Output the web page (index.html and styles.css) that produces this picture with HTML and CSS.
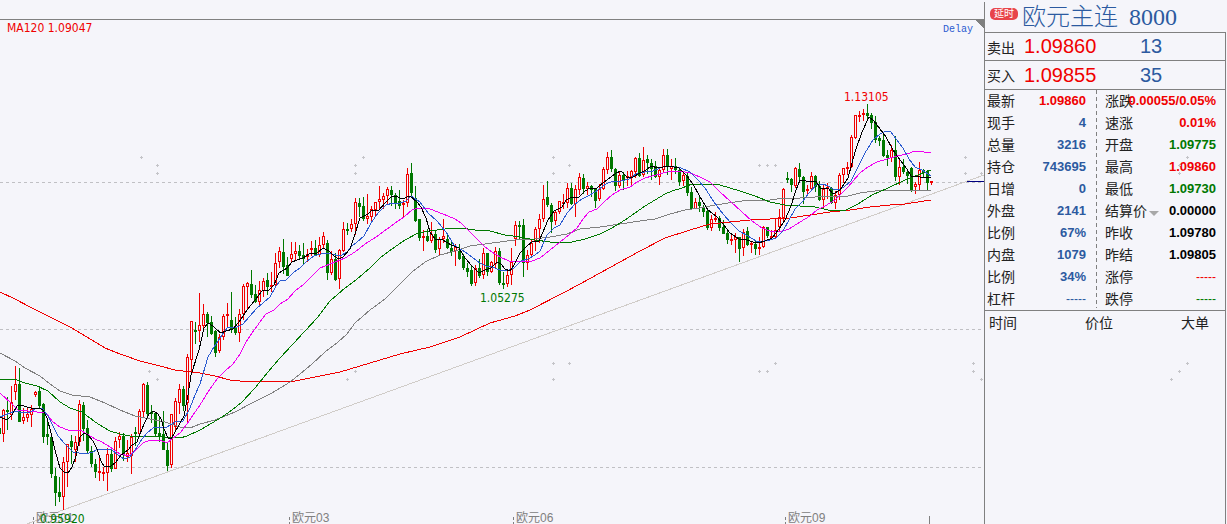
FILE: index.html
```html
<!DOCTYPE html>
<html lang="zh-CN">
<head>
    <meta charset="utf-8">
    <title>欧元主连 8000</title>
    <link rel="stylesheet" href="styles.css">
</head>
<body>
    <div class="terminal">
        <main class="chart">
            <svg id="kline" viewBox="0 0 984 524">
                <g class="grid">
                    <path d="M0 182.5H984M0 329.5H984M0 467.5H984"/>
                </g>
                <path class="frame" d="M0 19.5H984"/>
                <path class="corner" d="M974 19H984V29Z"/>
                <g id="dots" class="dots"></g>
                <path class="trend" d="M27 524L63 510L984 175"/>
                <g id="candles"></g>
                <g id="averages"></g>
                <path class="last-price" d="M967 181.5H984"/>
                <path class="tick dotted" d="M33.5 517V524M289.5 517V524M513.5 517V524M785.5 517V524"/>
                <path class="tick" d="M929.5 516V524"/>
                <text class="axis" x="36" y="522">欧元01</text>
                <text class="axis" x="292" y="522">欧元03</text>
                <text class="axis" x="516" y="522">欧元06</text>
                <text class="axis" x="788" y="522">欧元09</text>
                <text class="label up" x="7" y="32">MA120 1.09047</text>
                <text class="label up" x="844" y="101">1.13105</text>
                <text class="label down" x="480" y="302">1.05275</text>
                <text class="label down" x="40" y="523">0.95920</text>
                <text class="delay" x="943" y="32">Delay</text>
            </svg>
        </main>

        <aside class="panel">
            <svg class="panel-dots" viewBox="0 0 243 524"><g id="panel-dots" class="dots"></g></svg>
            <header class="title">
                <span class="badge">延时</span>
                <h1>欧元主连 <span class="code">8000</span></h1>
            </header>
            <div class="box">
                <div class="order">
                    <span class="name">卖出</span>
                    <span class="price">1.09860</span>
                    <span class="volume">13</span>
                </div>
                <div class="order">
                    <span class="name">买入</span>
                    <span class="price">1.09855</span>
                    <span class="volume">35</span>
                </div>
                <div class="quotes">
                    <table class="left">
                        <tr><th>最新</th><td class="up">1.09860</td></tr>
                        <tr><th>现手</th><td>4</td></tr>
                        <tr><th>总量</th><td>3216</td></tr>
                        <tr><th>持仓</th><td>743695</td></tr>
                        <tr><th>日增</th><td>0</td></tr>
                        <tr><th>外盘</th><td>2141</td></tr>
                        <tr><th>比例</th><td>67%</td></tr>
                        <tr><th>内盘</th><td>1079</td></tr>
                        <tr><th>比例</th><td>34%</td></tr>
                        <tr><th>杠杆</th><td class="none">-----</td></tr>
                    </table>
                    <table class="right">
                        <tr><th>涨跌</th><td class="up">0.00055/0.05%</td></tr>
                        <tr><th>速涨</th><td class="up">0.01%</td></tr>
                        <tr><th>开盘</th><td class="down">1.09775</td></tr>
                        <tr><th>最高</th><td class="up">1.09860</td></tr>
                        <tr><th>最低</th><td class="down">1.09730</td></tr>
                        <tr><th><button class="settle">结算价</button></th><td class="flat">0.00000</td></tr>
                        <tr><th>昨收</th><td class="flat">1.09780</td></tr>
                        <tr><th>昨结</th><td class="flat">1.09805</td></tr>
                        <tr><th>涨停</th><td class="up none">-----</td></tr>
                        <tr><th>跌停</th><td class="down none">-----</td></tr>
                    </table>
                </div>
                <div class="trades">
                    <span>时间</span>
                    <span>价位</span>
                    <span>大单</span>
                </div>
            </div>
        </aside>
    </div>
    <script src="chart.js"></script>
</body>
</html>
```
FILE: styles.css
```css
* {
    box-sizing: border-box;
}

body {
    margin: 0;
    background-color: #f5f5fa;
    font-family: "Liberation Sans", "Noto Sans CJK SC", sans-serif;
    font-size: 14px;
    color: #222;
    overflow: hidden;
}

.terminal {
    display: flex;
    min-height: 100vh;
}

.chart {
    flex: 1;
    min-width: 0;
}

#kline {
    display: block;
    width: 100%;
    shape-rendering: crispEdges;
}

#kline path, #kline polyline {
    fill: none;
    stroke-width: 1;
}

#kline .grid path {
    stroke: #c0c0c4;
    stroke-dasharray: 3 3;
}

#kline .frame, #kline .tick {
    stroke: #808080;
}

#kline .dotted {
    stroke-dasharray: 3 2;
}

#kline .corner {
    fill: #808080;
}

#kline .trend {
    stroke: #d0ccc8;
}

#kline .last-price {
    stroke: #000080;
}

.dots path {
    fill: none;
    stroke: #c4c4c8;
    shape-rendering: crispEdges;
}

#kline .rise {
    stroke: #f00000;
}

#kline .fall {
    stroke: #007800;
    fill: #007800;
}

.label {
    font-family: "DejaVu Sans Condensed", "DejaVu Sans", sans-serif;
    font-size: 12px;
}

.label.up {
    fill: #f00000;
}

.label.down {
    fill: #007800;
}

.axis {
    font-size: 12px;
    font-family: "Liberation Sans", "Noto Sans CJK SC", sans-serif;
    fill: #808080;
}

.delay {
    font-family: "Liberation Mono", monospace;
    font-size: 10px;
    fill: #2b5bd0;
}

.panel {
    position: relative;
    width: 243px;
    flex: none;
    display: flex;
    flex-direction: column;
    border-left: 1px solid #808080;
    margin-top: 2px;
}

.panel-dots {
    position: absolute;
    top: -2px;
    left: -1px;
    width: 243px;
}

.title {
    display: flex;
    align-items: center;
    height: 30px;
    padding-left: 5px;
    gap: 4px;
}

.title h1 {
    margin: 0;
    font-size: 24px;
    line-height: 30px;
    font-weight: 300;
    color: #2c5aa0;
    font-family: "Liberation Serif", "Noto Sans CJK SC", serif;
    white-space: nowrap;
}

.code {
    margin-left: 5px;
}

.badge {
    width: 28px;
    height: 12px;
    margin-bottom: 7px;
    border-radius: 5px;
    background-color: #e8444a;
    color: #fff;
    font-size: 10px;
    line-height: 12px;
    text-align: center;
}

.box {
    flex: 1;
    margin-right: 1px;
    border-top: 1px solid #808080;
    border-right: 1px solid #808080;
}

.order {
    display: flex;
    align-items: center;
    height: 28px;
    padding-left: 2px;
    border-bottom: 1px solid #808080;
}

.order + .order {
    height: 29px;
}

.order .name {
    width: 37px;
}

.order .price {
    width: 86px;
    font-size: 20px;
    color: #f00000;
}

.order .volume {
    width: 82px;
    text-align: center;
    font-size: 20px;
    color: #2c5aa0;
}

.quotes {
    display: flex;
    border-bottom: 1px solid #808080;
}

.quotes table {
    border-collapse: collapse;
    table-layout: fixed;
}

.quotes .left {
    flex: none;
    width: 112px;
    background: repeating-linear-gradient(to bottom, #808080 0, #808080 4px, transparent 4px, transparent 7px) right top / 1px 218px no-repeat;
}

.quotes .right {
    flex: none;
    width: 128px;
}

.quotes th, .quotes td {
    height: 22px;
    padding: 0;
    line-height: 22px;
    white-space: nowrap;
}

.quotes th {
    width: 30px;
    padding-left: 2px;
    font-weight: normal;
    text-align: left;
}

.quotes td {
    padding-right: 11px;
    text-align: right;
    font-size: 13px;
    font-weight: bold;
    color: #2c5aa0;
}

.quotes .right th {
    padding-left: 8px;
}

.quotes .right td {
    padding-right: 9px;
}

.quotes .up {
    color: #f00000;
}

.quotes .down {
    color: #007800;
}

.quotes .flat {
    color: #000;
}

.quotes .none {
    font-weight: normal;
    font-size: 12px;
}

.settle {
    display: flex;
    align-items: center;
    gap: 2px;
    height: 22px;
    padding: 0;
    border: none;
    background: none;
    color: inherit;
    font: inherit;
}

.settle::after {
    content: "";
    margin-top: 5px;
    border: 5px solid transparent;
    border-top-color: #a8a8a8;
    border-bottom: none;
}

.trades {
    display: flex;
    justify-content: space-between;
    padding: 0 16px 0 4px;
    line-height: 24px;
}
```
FILE: chart.js
```javascript
const NS = 'http://www.w3.org/2000/svg';
const STEP = 4;

// one bar per entry: colour, high, body top, body bottom, low
const bars = `
d 428 428 434 434|u 409 410 434 442|d 397 410 412 430|u 386 402 415 420|u 366 384 392 400|d 368 384 422 422
u 408 417 421 424|u 408 414 418 422|u 405 409 415 427|u 391 392 395 397|d 386 391 406 408|d 403 404 437 443
d 418 434 437 445|d 435 437 474 478|d 468 476 493 506|d 477 492 497 502|u 457 462 497 510|u 444 444 462 487
d 435 441 447 464|u 436 442 450 462|u 400 404 442 446|d 402 405 429 441|d 420 428 451 453|d 446 451 464 467
d 459 464 472 478|u 456 471 473 481|u 467 472 474 481|u 448 454 473 491|d 447 454 469 472|u 437 441 469 469
u 432 436 440 448|d 433 436 455 461|u 440 453 457 462|u 434 437 456 474|d 427 432 434 446|u 409 411 434 437
u 383 384 412 417|d 382 385 414 417|d 405 412 414 423|d 413 413 434 437|d 417 433 436 442|d 411 434 450 450
d 442 450 466 471|u 414 414 465 468|u 398 401 427 431|u 384 389 403 414|d 386 389 406 411|u 354 357 403 423
u 321 321 360 372|d 322 330 332 344|u 293 325 331 342|u 304 314 326 329|d 312 314 323 337|d 316 322 334 335
d 330 331 353 357|u 334 337 351 353|u 314 316 337 340|u 303 314 316 327|d 292 320 330 333|d 317 328 333 335
u 309 314 333 342|u 284 286 314 320|u 282 283 287 310|d 270 284 295 298|d 285 294 302 303|u 281 290 302 306
u 278 281 291 297|d 273 280 287 295|u 272 285 287 292|u 253 263 285 287|u 247 251 262 268|d 239 252 267 274
d 257 265 276 276|u 242 254 259 262|u 242 251 254 261|d 245 251 256 260|d 243 255 259 264|u 249 254 257 262
u 241 248 250 256|d 240 248 256 256|u 237 245 255 257|u 232 236 245 249|d 240 243 273 280|u 251 259 273 275
d 253 259 280 281|u 249 250 279 289|u 222 229 251 252|d 223 229 231 235|u 219 224 229 232|u 198 202 224 235
d 198 203 207 217|d 197 206 219 221|u 194 216 219 224|u 206 209 217 221|u 202 202 210 216|u 186 199 202 210
u 193 196 200 209|u 187 189 196 204|d 186 190 195 206|d 193 195 203 209|d 190 201 206 209|u 200 203 205 218
u 168 174 203 207|d 163 173 193 198|d 186 198 221 222|d 219 219 238 241|u 230 236 238 251|d 229 236 241 242
u 222 234 241 243|d 231 234 250 253|u 237 239 249 255|u 219 236 239 243|d 233 239 248 249|d 240 248 252 256
u 244 247 251 266|d 244 251 259 260|d 254 256 268 270|d 263 268 272 277|d 265 270 284 286|u 265 268 283 286
d 259 268 276 278|u 248 253 275 279|d 253 253 272 276|u 261 262 272 273|u 247 251 264 268|d 248 251 283 285
d 272 283 285 289|u 270 275 284 287|u 248 262 275 285|u 221 225 239 246|d 221 225 227 240|d 219 225 263 277
u 250 255 263 270|u 239 243 255 257|u 227 229 241 251|u 214 219 229 243|u 185 199 219 222|d 181 197 205 207
d 203 205 222 233|u 210 212 221 225|u 201 201 212 214|u 194 202 204 209|u 183 188 203 208|d 183 188 204 205
u 185 189 204 217|u 173 177 190 195|d 174 178 189 194|u 182 186 189 195|d 185 186 190 197|d 188 189 201 208
u 184 189 199 201|u 167 169 189 190|u 152 157 170 174|d 150 157 169 172|d 168 169 186 191|u 171 175 186 188
d 172 175 181 190|u 171 176 178 186|u 170 171 177 185|u 157 158 172 178|d 153 158 176 177|u 147 160 175 177
d 155 159 163 174|d 159 163 169 180|d 161 166 177 178|u 168 170 177 185|u 149 155 170 172|d 149 155 166 175
u 159 166 169 180|d 158 166 170 174|d 167 170 182 186|u 173 175 181 186|d 173 176 193 196|d 187 192 209 209
u 198 202 209 209|d 195 202 206 212|d 205 208 212 217|d 209 211 228 230|u 215 219 228 231|u 212 218 219 222
d 216 218 228 231|d 220 227 234 234|d 231 233 240 244|u 235 239 241 245|u 233 237 240 253|d 237 237 249 262
u 229 232 248 256|d 227 231 245 246|u 241 243 245 253|d 240 244 249 255|u 237 247 249 255|u 226 227 247 248
d 227 227 236 238|u 230 236 238 240|u 218 230 237 238|u 209 217 227 231|u 188 189 218 223|d 172 178 180 183
d 178 179 185 192|u 167 168 186 188|d 163 169 177 180|d 176 177 192 204|u 185 189 191 194|u 172 176 189 191
d 175 176 187 192|d 181 186 200 201|u 185 189 200 208|u 183 187 189 199|d 187 188 203 204|u 191 195 203 209
u 173 175 195 200|u 168 168 175 183|u 162 167 169 175|u 135 137 167 168|u 115 115 138 139|u 111 115 117 122
u 109 113 115 121|d 104 113 116 121|d 113 115 123 129|d 116 122 140 143|d 136 138 141 146|d 135 140 156 157
d 150 155 158 166|u 145 150 158 162|d 136 150 177 181|u 160 167 177 185|d 159 167 172 174|d 170 172 176 184
d 167 168 191 192|u 182 184 187 194|u 162 170 185 190|d 169 170 173 178|d 170 171 183 191|u 181 181 183 185
`.trim().split(/[|\n]/);

const averages = [
    { color: '#f00000', points: '0,292 15,299 30,307 50,317 70,327 92,340 105,348 120,354 140,361 160,366 175,370 200,373 215,376 230,380 240,381 295,381 315,377 340,372 360,366 400,354 430,347 460,337 490,323 515,316 530,310 563,293 580,284 600,273 620,262 640,251 665,238 690,230 710,224 730,222 750,220 770,219 790,218 810,215 830,212 850,210 870,207 890,205 905,204 931,200' },
    { color: '#808080', points: '0,353 15,361 25,368 40,376 50,384 60,391 72,395 90,397 105,403 120,410 135,416 150,419 165,422 180,427 190,428 200,424 215,420 235,412 252,403 272,393 290,382 300,374 312,364 325,352 337,343 347,334 355,323 370,310 385,299 398,286 412,272 425,262 440,255 455,251 470,246 485,244 500,242 515,240 535,239 550,237 567,234 580,229 600,227 620,224 640,221 655,219 670,214 685,210 700,208 715,205 735,202 750,200 770,200 785,198 800,198 815,197 848,196 860,193 875,191 890,190 931,190' },
    { color: '#007800', points: '0,379 14,379 25,383 37,386 48,391 60,402 70,408 82,412 90,418 98,424 110,431 120,434 130,436 150,436 165,437 180,438 187,436 200,430 212,423 222,417 232,410 242,402 255,388 268,372 280,358 293,344 305,331 318,317 330,301 337,295 345,288 356,280 370,268 380,258 392,249 405,240 418,233 430,231 445,229 460,228 475,230 490,231 505,235 520,237 535,240 550,242 572,242 585,239 600,234 612,228 625,220 635,213 645,206 655,200 665,194 672,191 682,188 692,184 705,184 720,185 730,188 740,191 755,196 770,202 785,205 800,206 815,207 828,210 846,210 858,204 872,195 888,188 905,180 918,175 931,170' },
    { color: '#f000f0', points: '0,393 12,404 18,410 28,411 37,412 46,413 53,422 60,427 68,430 80,430 87,434 95,439 102,442 110,447 120,454 129,456 136,450 143,443 150,440 160,440 167,443 173,438 180,433 187,424 193,415 200,405 208,392 217,379 225,371 233,364 240,354 246,342 252,333 260,322 266,314 274,310 280,304 288,299 295,291 304,284 312,276 320,268 330,264 345,258 355,252 365,244 376,237 387,229 398,221 404,217 412,210 418,208 428,208 435,211 443,214 455,219 461,223 468,230 476,238 485,247 492,252 500,257 509,261 532,261 540,258 550,250 560,242 570,234 577,228 583,219 589,212 597,209 604,202 612,195 620,190 630,187 637,182 645,178 652,176 660,174 670,171 680,171 690,173 700,177 710,182 719,191 730,201 741,211 752,221 762,228 770,231 779,232 789,229 800,222 810,216 817,210 825,206 835,200 842,193 848,187 853,181 860,173 868,167 877,162 887,159 897,156 907,154 915,151 924,152 931,153' },
    { color: '#2b5bd0', points: '0,417 10,413 15,411 23,413 30,412 37,408 42,408 48,416 52,424 58,436 65,444 73,452 79,453 85,454 93,452 98,449 105,449 112,450 118,455 124,459 130,457 137,447 142,439 147,433 153,428 160,427 167,427 175,422 183,421 190,408 195,395 200,384 208,357 214,347 222,335 228,327 235,328 243,324 250,316 257,308 263,303 270,297 276,286 280,281 286,280 294,272 300,268 307,261 314,256 324,253 332,254 340,256 347,252 352,246 356,243 364,236 371,223 378,213 386,205 393,203 400,203 406,201 411,196 420,202 428,213 437,221 446,232 454,245 465,252 472,257 480,263 486,266 492,267 500,270 506,271 514,268 521,261 528,259 535,255 540,251 547,235 554,228 560,225 567,213 575,204 582,199 590,195 598,190 606,184 613,181 621,181 629,179 636,174 645,172 653,171 660,168 666,166 675,167 681,168 690,172 698,180 705,188 714,202 723,214 731,223 739,231 748,236 756,241 764,241 770,240 776,238 783,231 789,220 795,209 802,202 809,193 817,184 823,184 828,186 833,189 838,190 844,187 851,181 857,169 865,153 873,140 880,134 886,131 891,132 896,139 903,148 909,159 915,167 922,170 931,176' },
    { color: '#000000', points: '0,417 7,420 12,415 17,406 21,405 27,407 35,409 39,408 43,410 47,418 51,433 55,450 60,468 64,472 68,473 72,467 76,456 80,437 84,433 88,435 93,441 97,449 101,461 104,466 111,466 116,462 121,455 128,450 132,445 137,442 140,434 144,424 149,414 154,411 158,414 161,419 164,429 168,438 171,439 174,434 179,425 184,416 188,395 191,375 199,350 204,328 208,323 213,326 217,330 221,333 226,331 233,329 239,322 247,310 255,300 262,291 269,290 274,285 279,273 287,268 292,262 297,260 303,258 309,254 317,253 323,248 329,251 334,256 339,259 343,257 350,249 355,234 360,218 368,214 372,210 379,210 386,202 391,197 396,196 402,199 410,196 417,202 421,207 426,218 430,232 435,239 443,240 451,245 459,248 465,258 472,266 479,273 485,270 491,268 497,262 501,264 505,269 510,271 514,265 520,253 527,246 533,241 539,241 543,232 548,220 554,211 562,207 566,200 572,197 579,197 585,191 590,188 597,188 604,182 611,177 616,173 621,171 627,177 633,177 640,173 646,170 651,166 658,168 669,166 679,168 686,175 693,184 700,197 708,210 716,216 723,224 730,233 739,239 747,240 753,242 758,243 765,241 772,238 779,229 785,220 791,206 796,190 800,180 806,181 811,182 816,181 820,188 828,188 833,194 840,190 848,178 855,152 862,132 869,117 874,121 886,137 893,150 900,160 907,169 911,176 920,177 931,178' }
];

const chartDots = [
    [141, 157], [157, 165], [157, 173], [363, 157], [355, 165], [355, 173], [553, 157], [569, 165], [553, 173],
    [759, 165], [767, 165], [775, 165], [965, 157], [965, 173], [981, 173],
    [149, 371], [157, 379], [355, 371], [347, 379], [553, 363], [569, 363], [553, 379],
    [775, 363], [759, 371], [767, 371], [973, 363], [973, 371], [981, 379]
];
const panelDots = [[203, 157], [195, 165], [195, 173], [203, 363], [195, 371], [187, 379]];

function add(parent, tag, attrs) {
    const el = document.createElementNS(NS, tag);
    for (const key in attrs) {
        el.setAttribute(key, attrs[key]);
    }
    document.getElementById(parent).appendChild(el);
}

function drawDots(parent, dots) {
    const d = dots.map(([x, y]) => `M${x - 1} ${y + 0.5}h3M${x + 0.5} ${y - 1}v3`).join('');
    add(parent, 'path', { d });
}

bars.forEach((bar, i) => {
    const [dir, ...values] = bar.split(' ');
    const [high, top, bottom, low] = values.map(Number);
    const x = i * STEP - 0.5;
    const h = Math.max(bottom - top - 1, 1);
    // wick stops at the body so that rising bars stay hollow
    const wick = `M${x} ${high}V${top}M${x} ${bottom}V${Math.max(low, bottom)}`;
    const body = `M${x - 1} ${top + 0.5}h2v${h}h-2Z`;
    add('candles', 'path', { class: dir === 'u' ? 'rise' : 'fall', d: wick + body });
});

averages.forEach(line => add('averages', 'polyline', { points: line.points, stroke: line.color }));

drawDots('dots', chartDots);
drawDots('panel-dots', panelDots);
```
